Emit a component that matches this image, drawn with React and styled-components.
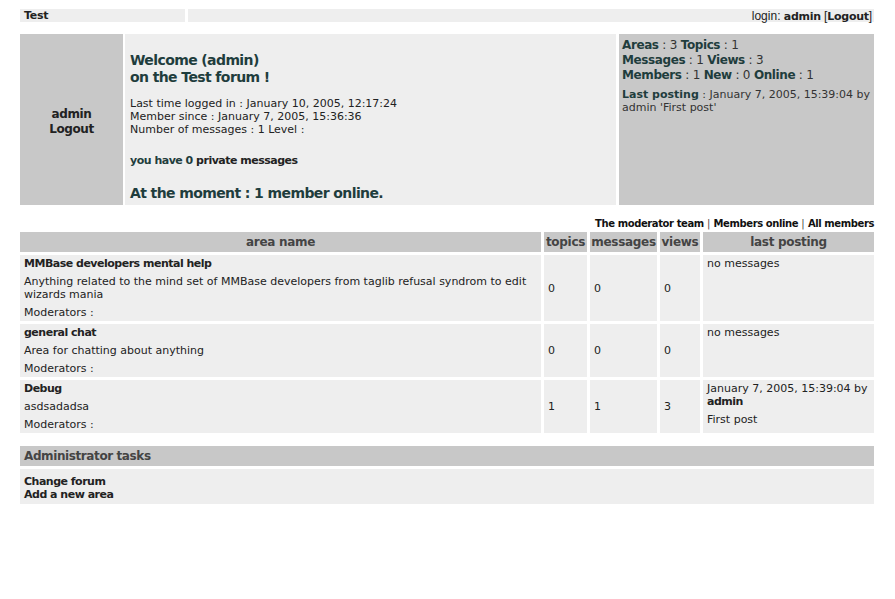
import React from "react";
import styled, { createGlobalStyle } from "styled-components";

const GlobalStyle = createGlobalStyle`
  body {
    margin: 0;
    background: #fff;
    font-family: "DejaVu Sans", Verdana, sans-serif;
    font-size: 11px;
    color: #222;
  }
  b {
    letter-spacing: -0.5px;
  }
`;

const areas = [
  {
    name: "MMBase developers mental help",
    description:
      "Anything related to the mind set of MMBase developers from taglib refusal syndrom to edit wizards mania",
    topics: 0,
    messages: 0,
    views: 0,
    last: null,
  },
  {
    name: "general chat",
    description: "Area for chatting about anything",
    topics: 0,
    messages: 0,
    views: 0,
    last: null,
  },
  {
    name: "Debug",
    description: "asdsadadsa",
    topics: 1,
    messages: 1,
    views: 3,
    last: { date: "January 7, 2005, 15:39:04 by", by: "admin", subject: "First post" },
  },
];

export default function App() {
  return (
    <>
      <GlobalStyle />
      <Page>
        <TopBar>
          <TopTitle>Test</TopTitle>
          <TopLogin>
            login: <b>admin</b> [<b>Logout</b>]
          </TopLogin>
        </TopBar>

        <Header>
          <UserCell>
            admin
            <br />
            Logout
          </UserCell>
          <WelcomeCell>
            <Big>
              Welcome (admin)
              <br />
              on the Test forum !
            </Big>
            <Info>
              Last time logged in : January 10, 2005, 12:17:24
              <br />
              Member since : January 7, 2005, 15:36:36
              <br />
              Number of messages : 1 Level :
            </Info>
            <Private>
              <Teal>you have 0</Teal> private messages
            </Private>
            <Big>At the moment : 1 member online.</Big>
          </WelcomeCell>
          <StatsCell>
            <Stats>
              <b>Areas</b> : 3 <b>Topics</b> : 1
              <br />
              <b>Messages</b> : 1 <b>Views</b> : 3
              <br />
              <b>Members</b> : 1 <b>New</b> : 0 <b>Online</b> : 1
            </Stats>
            <LastPost>
              <b>Last posting</b> : January 7, 2005, 15:39:04 by admin 'First post'
            </LastPost>
          </StatsCell>
        </Header>

        <Links>
          <b>The moderator team</b> | <b>Members online</b> | <b>All members</b>
        </Links>

        <AreaTable>
          <colgroup>
            <col style={{ width: 521 }} />
            <col style={{ width: 43 }} />
            <col style={{ width: 67 }} />
            <col style={{ width: 40 }} />
            <col />
          </colgroup>
          <thead>
            <tr>
              <Th>area name</Th>
              <Th>topics</Th>
              <Th>messages</Th>
              <Th>views</Th>
              <Th>last posting</Th>
            </tr>
          </thead>
          <tbody>
            {areas.map((a) => (
              <tr key={a.name}>
                <Td>
                  <AreaName>{a.name}</AreaName>
                  <Para>{a.description}</Para>
                  <Para>Moderators :</Para>
                </Td>
                <Td>{a.topics}</Td>
                <Td>{a.messages}</Td>
                <Td>{a.views}</Td>
                <Td $top>
                  {a.last ? (
                    <>
                      {a.last.date}
                      <br />
                      <b>{a.last.by}</b>
                      <Para>{a.last.subject}</Para>
                    </>
                  ) : (
                    "no messages"
                  )}
                </Td>
              </tr>
            ))}
          </tbody>
        </AreaTable>

        <AdminHead>Administrator tasks</AdminHead>
        <AdminBody>
          Change forum
          <br />
          Add a new area
        </AdminBody>
      </Page>
    </>
  );
}

const Page = styled.div`
  padding: 9px 21px 0 20px;
  width: 854px;
`;

const TopBar = styled.div`
  display: flex;
  gap: 3px;
  height: 13px;
  line-height: 14px;
`;

const TopTitle = styled.div`
  width: 161px;
  background: #eeeeee;
  padding-left: 4px;
  font-weight: bold;
  letter-spacing: -0.3px;
  font-size: 11px;
`;

const TopLogin = styled.div`
  flex: 1;
  background: #eeeeee;
  text-align: right;
  padding-right: 2px;
  font-family: "Liberation Sans", Arial, sans-serif;
  font-size: 12px;
  color: #222;
  b {
    font-family: "DejaVu Sans", Verdana, sans-serif;
    font-size: 11px;
    letter-spacing: -0.3px;
  }
`;

const Header = styled.div`
  margin-top: 12px;
  display: grid;
  grid-template-columns: 103px 492px 1fr;
  column-gap: 2px;
  height: 171px;
`;

const UserCell = styled.div`
  background: #c8c8c8;
  display: flex;
  align-items: center;
  justify-content: center;
  text-align: center;
  font-weight: bold;
  letter-spacing: -0.4px;
  font-size: 12px;
  line-height: 15px;
  padding-top: 4px;
`;

const WelcomeCell = styled.div`
  background: #eeeeee;
  padding: 18px 5px 0 5px;
  margin-right: 1px;
`;

const Big = styled.div`
  font-size: 14px;
  font-weight: bold;
  letter-spacing: -0.6px;
  line-height: 17px;
  color: #1f3d3d;
`;

const Info = styled.div`
  margin: 11px 0 18px;
  line-height: 13px;
`;

const Private = styled.div`
  font-weight: bold;
  letter-spacing: -0.5px;
  margin-bottom: 18px;
`;

const Teal = styled.span`
  color: #1f3d3d;
`;

const StatsCell = styled.div`
  background: #c8c8c8;
  padding: 4px 3px 0 3px;
  color: #333;
`;

const Stats = styled.div`
  font-size: 12px;
  line-height: 15px;
  letter-spacing: -0.2px;
  b {
    color: #1f3d3d;
    letter-spacing: -0.4px;
  }
`;

const LastPost = styled.div`
  margin-top: 5px;
  line-height: 13px;
  b {
    color: #1f3d3d;
    letter-spacing: 0;
  }
`;

const Links = styled.div`
  margin: 12px 0 1px;
  text-align: right;
  font-size: 10px;
  line-height: 14px;
  color: #444;
  b {
    color: #111;
    letter-spacing: -0.4px;
  }
`;

const AreaTable = styled.table`
  border-collapse: separate;
  border-spacing: 3px;
  margin: -3px -3px 0 -3px;
  width: calc(100% + 6px);
  table-layout: fixed;
`;

const Th = styled.th`
  background: #c8c8c8;
  color: #444;
  font-size: 12px;
  letter-spacing: -0.3px;
  height: 20px;
  padding: 0;
`;

const Td = styled.td`
  background: #eeeeee;
  padding: 2px 4px 2px 4px;
  vertical-align: ${(p) => (p.$top ? "top" : "middle")};
  line-height: 13px;
`;

const AreaName = styled.div`
  font-weight: bold;
  letter-spacing: -0.5px;
  line-height: 13px;
`;

const Para = styled.div`
  margin-top: 5px;
`;

const AdminHead = styled.div`
  margin-top: 10px;
  background: #c8c8c8;
  color: #444;
  font-weight: bold;
  letter-spacing: -0.4px;
  font-size: 12px;
  height: 20px;
  line-height: 20px;
  padding-left: 4px;
`;

const AdminBody = styled.div`
  margin-top: 3px;
  background: #eeeeee;
  font-weight: bold;
  letter-spacing: -0.5px;
  line-height: 13px;
  padding: 6px 4px 3px;
`;
